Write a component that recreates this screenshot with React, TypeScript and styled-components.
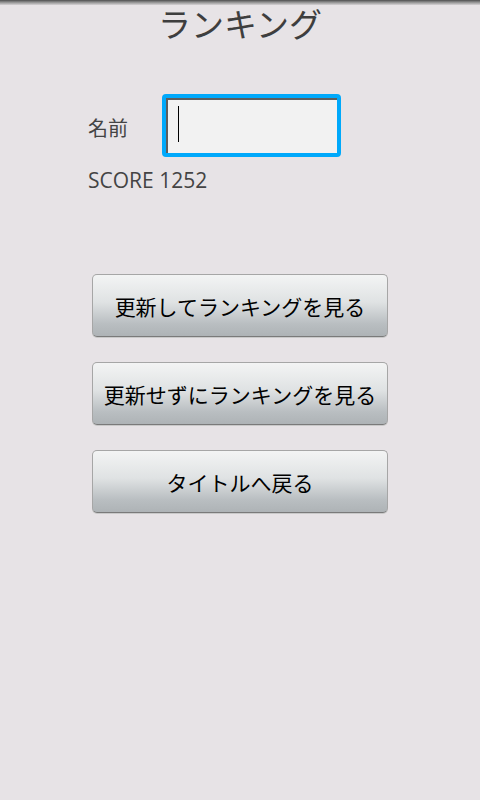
import styled, { createGlobalStyle } from "styled-components";

const GlobalStyle = createGlobalStyle`
  html, body {
    margin: 0;
    padding: 0;
    background: #e7e3e6;
  }
  body {
    font-family: "Open Sans", "Noto Sans CJK JP", sans-serif;
  }
`;

const Screen = styled.div`
  width: 480px;
  height: 800px;
  display: flex;
  flex-direction: column;
  background: #e7e3e6;
  overflow: hidden;
`;

const TopShade = styled.div`
  flex: 0 0 5px;
  background: linear-gradient(to bottom, #4e4e4e 0%, #8a8a8a 40%, #d6d3d5 100%);
`;

const Title = styled.h1`
  margin: 0;
  text-align: center;
  font-family: "Noto Sans CJK JP", sans-serif;
  font-size: 33px;
  font-weight: 400;
  line-height: 36px;
  color: #3e3e3e;
`;

const Form = styled.div`
  display: flex;
  flex-direction: column;
  padding: 53px 0 0 88px;
`;

const NameRow = styled.div`
  display: flex;
  align-items: center;
`;

const Label = styled.span`
  width: 74px;
  font-family: "Noto Sans CJK JP", sans-serif;
  font-size: 20px;
  color: #444;
  padding-top: 4px;
`;

const InputBox = styled.div`
  position: relative;
  width: 171px;
  height: 55px;
  border: 4px solid #00a9fb;
  border-radius: 4px;
  background: #f2f2f2;
  box-shadow: inset 2px 2px 0 #5e5e5e;
`;

const Caret = styled.span`
  position: absolute;
  left: 12px;
  top: 8px;
  width: 1px;
  height: 36px;
  background: #000;
`;

const Score = styled.div`
  margin-top: 9px;
  font-family: "Open Sans", sans-serif;
  font-size: 21px;
  line-height: 28px;
  color: #444;
`;

const Buttons = styled.div`
  display: flex;
  flex-direction: column;
  align-items: center;
  gap: 25px;
  margin-top: 80px;
`;

const Button = styled.button`
  width: 296px;
  height: 63px;
  padding: 0;
  border: 1px solid #a6a6a6;
  border-bottom-color: #7a7a7a;
  border-radius: 5px;
  background: linear-gradient(to bottom, #f3f4f4 0%, #dfe2e3 45%, #b9bec1 80%, #aeb3b6 100%);
  box-shadow: 0 1px 0 #c9c9c9;
  font-family: "Noto Sans CJK JP", sans-serif;
  font-size: 21px;
  color: #000;
  cursor: pointer;
`;

export default function App() {
  return (
    <Screen>
      <GlobalStyle />
      <TopShade />
      <Title>ランキング</Title>
      <Form>
        <NameRow>
          <Label>名前</Label>
          <InputBox>
            <Caret />
          </InputBox>
        </NameRow>
        <Score>SCORE 1252</Score>
      </Form>
      <Buttons>
        <Button>更新してランキングを見る</Button>
        <Button>更新せずにランキングを見る</Button>
        <Button>タイトルへ戻る</Button>
      </Buttons>
    </Screen>
  );
}
